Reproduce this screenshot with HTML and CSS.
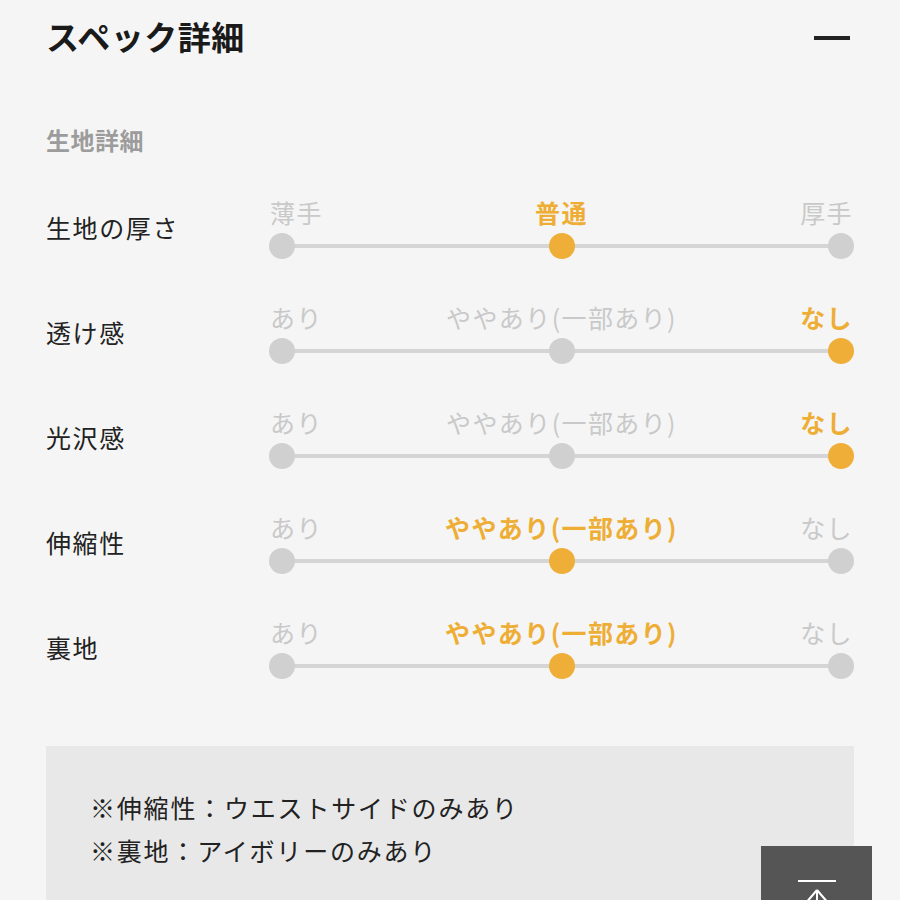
FILE: index.html
```html
<!DOCTYPE html>
<html lang="ja">
<head>
    <meta charset="UTF-8">
    <meta name="viewport" content="width=device-width, initial-scale=1.0">
    <title>スペック詳細</title>
    <link rel="stylesheet" href="styles.css">
</head>
<body>
    <div class="spec">
        <div class="spec-head">
            <h2>スペック詳細</h2>
            <span class="toggle"></span>
        </div>

        <h3 class="section-title">生地詳細</h3>

        <div class="rows">
            <div class="row">
                <div class="row-label">生地の厚さ</div>
                <div class="scale">
                    <div class="scale-labels">
                        <span>薄手</span>
                        <span class="on">普通</span>
                        <span>厚手</span>
                    </div>
                    <div class="track">
                        <i class="dot"></i><i class="dot on"></i><i class="dot"></i>
                    </div>
                </div>
            </div>

            <div class="row">
                <div class="row-label">透け感</div>
                <div class="scale">
                    <div class="scale-labels">
                        <span>あり</span>
                        <span>ややあり(一部あり)</span>
                        <span class="on">なし</span>
                    </div>
                    <div class="track">
                        <i class="dot"></i><i class="dot"></i><i class="dot on"></i>
                    </div>
                </div>
            </div>

            <div class="row">
                <div class="row-label">光沢感</div>
                <div class="scale">
                    <div class="scale-labels">
                        <span>あり</span>
                        <span>ややあり(一部あり)</span>
                        <span class="on">なし</span>
                    </div>
                    <div class="track">
                        <i class="dot"></i><i class="dot"></i><i class="dot on"></i>
                    </div>
                </div>
            </div>

            <div class="row">
                <div class="row-label">伸縮性</div>
                <div class="scale">
                    <div class="scale-labels">
                        <span>あり</span>
                        <span class="on">ややあり(一部あり)</span>
                        <span>なし</span>
                    </div>
                    <div class="track">
                        <i class="dot"></i><i class="dot on"></i><i class="dot"></i>
                    </div>
                </div>
            </div>

            <div class="row">
                <div class="row-label">裏地</div>
                <div class="scale">
                    <div class="scale-labels">
                        <span>あり</span>
                        <span class="on">ややあり(一部あり)</span>
                        <span>なし</span>
                    </div>
                    <div class="track">
                        <i class="dot"></i><i class="dot on"></i><i class="dot"></i>
                    </div>
                </div>
            </div>
        </div>

        <div class="note">
            <p>※伸縮性：ウエストサイドのみあり</p>
            <p>※裏地：アイボリーのみあり</p>
        </div>
    </div>

    <a class="to-top" href="#">
        <svg width="40" height="40" viewBox="0 0 40 40" fill="none" stroke="#fff" stroke-width="2">
            <line x1="1" y1="1" x2="39" y2="1"/>
            <path d="M20 10 L8 24 M20 10 L32 24 M20 10 L20 40"/>
        </svg>
    </a>
</body>
</html>
```

FILE: styles.css
```css
/* Base */
body {
    margin: 0;
    background: #f5f5f5;
    color: #222;
    font-family: "Noto Sans CJK JP", "Noto Sans", sans-serif;
    overflow: hidden;
}

.spec {
    padding: 12px 46px 0;
}

/* Header */
.spec-head {
    display: flex;
    align-items: center;
    justify-content: space-between;
    height: 48px;
}

.spec-head h2 {
    margin: 0;
    font-size: 33px;
    font-weight: 700;
    letter-spacing: 0.5px;
    color: #1a1a1a;
}

.toggle {
    width: 36px;
    height: 4px;
    margin-right: 4px;
    margin-top: 4px;
    background: #222;
}

.section-title {
    margin: 64px 0 0;
    height: 32px;
    line-height: 32px;
    font-size: 24px;
    font-weight: 700;
    color: #9c9c9c;
    letter-spacing: 0.5px;
}

/* Rows */
.rows {
    display: flex;
    flex-direction: column;
    gap: 43px;
    margin-top: 41px;
}

.row {
    display: grid;
    grid-template-columns: 223px 1fr;
    align-items: center;
}

.row-label {
    font-size: 25px;
    letter-spacing: 1.6px;
    line-height: 30px;
    padding-bottom: 3px;
}

.scale-labels {
    display: grid;
    grid-template-columns: 1fr auto 1fr;
    height: 30px;
    line-height: 30px;
    font-size: 25px;
    letter-spacing: 1.4px;
    color: #c9c9c9;
    padding: 0 1px;
}

.scale-labels span:first-child { justify-self: start; }
.scale-labels span:last-child { justify-self: end; }

.scale-labels .on {
    color: #eeae35;
    font-weight: 700;
}

.track {
    position: relative;
    display: flex;
    justify-content: space-between;
    margin-top: 6px;
}

.track::before {
    content: "";
    position: absolute;
    left: 13px;
    right: 13px;
    top: 11px;
    height: 4px;
    background: #d5d5d5;
}

.dot {
    position: relative;
    width: 26px;
    height: 26px;
    border-radius: 50%;
    background: #d0d0d0;
}

.dot.on {
    background: #efae38;
}

/* Note box */
.note {
    margin-top: 67px;
    background: #e8e8e8;
    padding: 40px 44px 28px;
}

.note p {
    margin: 0;
    font-size: 25px;
    line-height: 43px;
    letter-spacing: 1.8px;
}

/* Back to top */
.to-top {
    position: fixed;
    right: 28px;
    bottom: -56px;
    width: 111px;
    height: 110px;
    background: #555;
    display: flex;
    justify-content: center;
    padding-top: 34px;
    box-sizing: border-box;
}
```
